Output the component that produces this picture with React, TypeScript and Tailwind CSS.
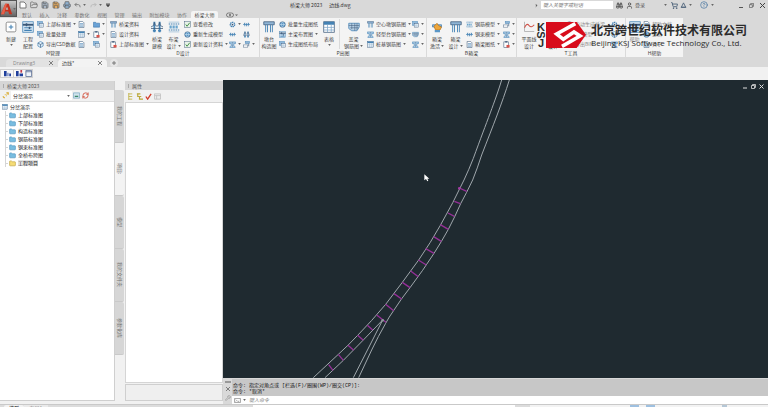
import type { ReactNode } from "react";
import { Binoculars, ChevronRight, CircleHelp, Folder, FolderOpen, Printer, RefreshCw, Save, ShoppingCart, User, Wrench } from "lucide-react";

type GlyphName =
  | "pier" | "beam" | "doc" | "table" | "tiles" | "folder" | "box" | "check" | "globe" | "clip"
  | "towers" | "rows" | "wave" | "spring" | "hat" | "arrows" | "plus" | "hand" | "gear" | "steps";

const blue = "#4482b4";
const navy = "#3b5878";

const glyphs: Record<GlyphName, ReactNode> = {
  plus: (
    <>
      <rect x="1.5" y="1.5" width="13" height="13" rx="2" fill="#fff" stroke="#6f6f6f" />
      <path d="M8 5v6M5 8h6" stroke={blue} strokeWidth="1.4" />
    </>
  ),
  table: (
    <>
      <rect x="1" y="1" width="14" height="14" fill="#fff" stroke={navy} />
      <rect x="1" y="1" width="14" height="4" fill={blue} />
      <path d="M1 8.500h14M1 12h14M6 5v10M11 5v10" stroke="#7fa6c8" />
    </>
  ),
  rows: (
    <>
      <rect x="1" y="1" width="14" height="14" fill="#d6e6f3" stroke={blue} />
      <path d="M1 5h14" stroke={navy} strokeWidth="2.500" />
      <path d="M3 9h10M3 12.500h10" stroke={blue} strokeWidth="1.500" />
      <path d="M6 3v4M10 7.500v3" stroke={navy} strokeWidth="2" />
    </>
  ),
  doc: (
    <>
      <path d="M2.500 1h8l3 3v11h-11z" fill="#fff" stroke={navy} strokeWidth="1.300" />
      <path d="M4.500 6h7M4.500 9h7M4.500 12h7" stroke={blue} strokeWidth="1.500" />
    </>
  ),
  tiles: (
    <>
      <rect x="1" y="1" width="12" height="9" fill="#8fb9dc" stroke={blue} />
      <rect x="5" y="6" width="10" height="8" fill="#fff" stroke={navy} />
      <path d="M7 9h6M7 11.500h6" stroke={blue} />
    </>
  ),
  box: (
    <>
      <path d="M8 1l6 3.500v7L8 15l-6-3.500v-7z" fill="#dcecf8" stroke={blue} strokeWidth="1.500" />
      <path d="M2 4.500L8 8l6-3.500M8 8v7" stroke={navy} strokeWidth="1.500" fill="none" />
    </>
  ),
  folder: <path d="M1 3h5l2 2h7v9H1z" fill="#6aa2d6" stroke="#3d73a8" strokeWidth="1.300" />,
  clip: (
    <>
      <rect x="2" y="2" width="11" height="13" fill="#fff" stroke={navy} strokeWidth="1.300" />
      <path d="M5 2h5" stroke={navy} strokeWidth="3" />
      <rect x="8" y="9" width="7" height="6" fill="#d9534a" />
    </>
  ),
  check: (
    <>
      <rect x="1" y="1" width="14" height="14" fill="#e8f2e8" stroke={navy} />
      <path d="M4 8l3 4 6-8" stroke="#3f8f45" strokeWidth="2.200" fill="none" />
    </>
  ),
  globe: (
    <>
      <circle cx="8" cy="8" r="6.500" fill="#5b97c6" stroke={navy} />
      <path d="M2 8h12M8 2c-4 4-4 8 0 12c4-4 4-8 0-12" stroke="#e9f3fa" fill="none" />
    </>
  ),
  pier: (
    <>
      <path d="M1 1h14v4H1z" fill="#8fb5d6" stroke={navy} />
      <path d="M3.500 5v10M6 5v10M10 5v10M12.500 5v10" stroke={blue} strokeWidth="1.200" />
    </>
  ),
  beam: (
    <>
      <path d="M1 2h14v4h-4v5l3 2v2H2v-2l3-2V6H1z" fill="#a9c9e3" stroke={blue} strokeWidth="1.200" />
      <path d="M8 3v11" stroke={navy} strokeDasharray="2 1" />
    </>
  ),
  towers: (
    <>
      <path d="M4.500 1v14M11.500 1v14" stroke={blue} strokeWidth="2.500" />
      <path d="M0 10h16M0 8q4.500-1 4.500-6q1 5 3.500 5t3.500-5q0 5 4.500 6" stroke={navy} fill="none" />
      <path d="M2.500 13h4M9.500 13h4" stroke={blue} strokeWidth="2" />
    </>
  ),
  wave: (
    <>
      <path d="M2 1v13h13" stroke="#a5a5a5" fill="none" />
      <path d="M2 9q3-7 6-3t7-1" stroke="#cf5147" strokeWidth="1.400" fill="none" />
    </>
  ),
  spring: (
    <>
      <path d="M1 4h14M1 12h14" stroke={blue} strokeDasharray="2 1" strokeWidth="1.500" />
      <path d="M2 8h12" stroke="#6ba6ce" strokeWidth="4" strokeDasharray="3 1" />
      <path d="M1 1.500h14M1 14.500h14" stroke="#9bbdd7" />
    </>
  ),
  hat: (
    <>
      <path d="M1 3h14v5l-3 5H5L1 10z" fill="#b6cfe4" stroke={blue} />
      <path d="M1 6h14M3 9h11M5 3v8M9 3v10M12 3v9" stroke={navy} strokeWidth=".7" />
    </>
  ),
  arrows: <path d="M1 8h14M4 4v8M12 4v8M1 8l3-3M15 8l-3-3M8 5v7" stroke={blue} strokeWidth="1.800" fill="none" />,
  hand: (
    <>
      <path d="M2 5h12v3H2z" fill="#8fb5d6" stroke={blue} />
      <path d="M4 7l4-4 2 3 4 2-2 4H6z" fill="#eda63c" stroke="#b9741a" />
      <path d="M5 12h7v3H5z" fill="#5b97c6" />
    </>
  ),
  gear: (
    <>
      <circle cx="8" cy="8" r="5" fill="none" stroke={blue} strokeWidth="3" strokeDasharray="3 1" />
      <circle cx="8" cy="8" r="2" fill={navy} />
    </>
  ),
  steps: (
    <>
      <rect x="5" y="1" width="10" height="5" fill="#8fb5d6" stroke={blue} />
      <rect x="1" y="9" width="10" height="5" fill="#fff" stroke={navy} />
      <path d="M13 6v6" stroke={navy} strokeWidth="1.500" />
    </>
  ),
};

function Glyph({ name, className = "size-[7px]" }: { name: GlyphName; className?: string }) {
  return (
    <svg viewBox="0 0 16 16" className={`shrink-0 ${className}`} aria-hidden="true">
      {glyphs[name]}
    </svg>
  );
}

function Caret({ className = "" }: { className?: string }) {
  return (
    <svg viewBox="0 0 4 3" className={`h-[2px] w-[3px] shrink-0 ${className}`} aria-hidden="true">
      <path d="M0 0h4L2 3z" fill="#666" />
    </svg>
  );
}

interface SmallItem {
  icon: GlyphName;
  label?: string;
  menu?: boolean;
}

function SmallColumn({ items, className }: { items: SmallItem[]; className: string }) {
  return (
    <div className={`flex shrink-0 flex-col ${className}`}>
      {items.map((item, i) => (
        <button key={i} type="button" className="flex h-[10px] items-center gap-[2px] whitespace-nowrap" aria-label={item.label ?? "工具"}>
          <Glyph name={item.icon} />
          {item.label && <span>{item.label}</span>}
          {item.menu && <Caret />}
        </button>
      ))}
    </div>
  );
}

function BigButton({ icon, lines, menu, className }: { icon: GlyphName; lines: string[]; menu?: boolean; className: string }) {
  return (
    <button type="button" className={`flex shrink-0 flex-col items-center ${className}`}>
      <Glyph name={icon} className="mb-[2px] size-[12px]" />
      {lines.map((line, i) => (
        <span key={line} className="flex h-[7px] items-center gap-px leading-[7px] whitespace-nowrap">
          {line}
          {menu && lines.length > 1 && i === lines.length - 1 && <Caret />}
        </span>
      ))}
      {menu && lines.length === 1 && <Caret className="mt-[2px]" />}
    </button>
  );
}

function Group({ title, className, children }: { title: string; className: string; children: ReactNode }) {
  return (
    <section className={`flex shrink-0 flex-col border-r border-[#dadada] ${className}`}>
      <div className="flex h-[31px] pt-px">{children}</div>
      <h2 className="text-center leading-[8px]">{title}</h2>
    </section>
  );
}

const menus = ["默认", "插入", "注释", "参数化", "视图", "管理", "输出", "附加模块", "协作"];

function TitleBar() {
  return (
    <header className="flex h-[18px] shrink-0">
      <button type="button" aria-label="应用程序菜单" className="flex h-[17px] w-[17px] shrink-0 items-center border border-[#555] bg-linear-to-b from-[#c9c9c9] to-[#666]">
        <svg viewBox="0 0 14 14" className="size-[12px]" aria-hidden="true">
          <path d="M0 13L5 1h4l4 12h-3.500L8.500 10H5l-1.500 3z" fill="#c5321f" />
          <path d="M5.500 8L7 4l1.500 4z" fill="#b9b9b9" />
          <path d="M5 1h2L3.500 13H0z" fill="#e8614a" />
        </svg>
        <Caret />
      </button>
      <div className="flex min-w-0 grow flex-col">
        <div className="flex h-[10px] items-center">
          <div className="flex w-[273px] shrink-0 items-center gap-[2px] pl-[2px] text-[#5a5a5a]">
            <svg viewBox="0 0 8 8" className="size-[8px]"><path d="M1 1h4l2 2v4H1z" fill="#fff" stroke="#777" /></svg>
            <FolderOpen size={8} className="ml-px" />
            <Save size={8} className="ml-px" fill="#a9b6c4" />
            <Save size={8} className="ml-px" fill="#e0a860" />
            <Printer size={8} className="ml-px" fill="#8fb0cf" />
            <svg viewBox="0 0 8 8" className="ml-px size-[7px]"><path d="M3 1L1 3l2 2M1 3h4q2 0 2 3" fill="none" stroke="#777" /></svg>
            <Caret />
            <svg viewBox="0 0 8 8" className="ml-[2px] size-[7px]"><path d="M5 1l2 2-2 2M7 3H3Q1 3 1 6" fill="none" stroke="#b8b8b8" /></svg>
            <Caret />
            <svg viewBox="0 0 5 5" className="ml-[2px] size-[4px]"><path d="M0 .5h5M0 2h5L2.500 5z" fill="#444" stroke="#444" strokeWidth=".6" /></svg>
          </div>
          <h1 className="flex shrink-0 gap-[7px] text-[#333]">
            <span>桥梁大师 2023</span>
            <span>边线.dwg</span>
          </h1>
          <div className="ml-auto flex shrink-0 items-center text-[#555]">
            <ChevronRight size={5} className="mr-[2px]" fill="#555" />
            <input aria-label="搜索" placeholder="键入关键字或短语" className="h-[8px] w-[72px] bg-white px-[2px] text-[5px] italic placeholder:text-[#777]" />
            <Binoculars size={7} strokeWidth={3} className="ml-[3px]" />
            <User size={7} strokeWidth={3} className="ml-[3px]" />
            <button type="button" className="ml-[2px] w-[10px] whitespace-nowrap">登录</button>
            <Caret className="ml-[19px]" />
            <ShoppingCart size={7} strokeWidth={3} className="ml-[4px] text-[#4a6078]" />
            <svg viewBox="0 0 8 8" className="ml-[2px] size-[7px]"><path d="M4 1l2.500 5h-5zM1 6h6" fill="none" stroke="#4a6078" /></svg>
            <Caret className="ml-[2px]" />
            <CircleHelp size={8} className="ml-[8px] text-[#3f6f9f]" />
            <Caret className="ml-[3px]" />
          </div>
          <div className="ml-[24px] flex w-[30px] shrink-0 items-center justify-between pr-[3px]">
            <button type="button" aria-label="最小化"><svg viewBox="0 0 5 5" className="size-[5px]"><path d="M1 4.500h4" stroke="#555" /></svg></button>
            <button type="button" aria-label="还原"><svg viewBox="0 0 6 6" className="size-[5px]"><path d="M2 2V.5h3.500V4H4M.5 2H4v3.500H.5z" fill="none" stroke="#555" strokeWidth=".8" /></svg></button>
            <button type="button" aria-label="关闭"><svg viewBox="0 0 5 5" className="size-[5px]"><path d="M0 0l5 5M5 0L0 5" stroke="#444" /></svg></button>
          </div>
        </div>
        <nav className="flex h-[8px] items-end">
          <div className="flex w-[174px] shrink-0 justify-between pr-[4px] pl-[5px] leading-[7px] text-[#777]">
            {menus.map((m) => (
              <button key={m} type="button" className="whitespace-nowrap">{m}</button>
            ))}
          </div>
          <button type="button" className="h-[7px] w-[27px] rounded-t-xs bg-[#f4f4f4] leading-[7px] text-[#444]">桥梁大师</button>
          <svg viewBox="0 0 12 6" className="ml-[8px] h-[6px] w-[12px]" aria-hidden="true">
            <rect x=".5" y="1" width="7" height="4" rx="2" fill="none" stroke="#666" strokeWidth=".8" />
            <circle cx="4" cy="3" r="1" fill="#666" />
            <path d="M9 2.500h3L10.500 4z" fill="#666" />
          </svg>
        </nav>
      </div>
    </header>
  );
}

function CompanyLogo() {
  return (
    <div className="absolute top-[4px] left-[536px] flex items-center text-[#2b2b2b]">
      <div className="flex w-[10px] flex-col items-center font-['Liberation_Sans'] text-[11px] leading-[8px] font-bold">
        <span>K</span>
        <span className="rotate-90">S</span>
        <span>J</span>
      </div>
      <svg viewBox="0 0 120 78" className="h-[26px] w-[40px]" aria-hidden="true">
        <path d="M0 0h92l28 38-28 40H0z" fill="#d80c1c" />
        <path d="M88 5L32 36l20 16 32-22 18 12-54 31" fill="none" stroke="#fff" strokeWidth="11" />
      </svg>
      <div className="ml-[5px] whitespace-nowrap">
        <p className="text-[12px] leading-[15px] font-bold">北京跨世纪软件技术有限公司</p>
        <p className="font-['Open_Sans'] text-[8px] leading-[11px]">Beijing KSJ Software Technology Co., Ltd.</p>
      </div>
    </div>
  );
}

function Ribbon() {
  return (
    <div className="relative flex h-[39px] shrink-0">
      <div className="flex bg-[#f4f4f4] text-[#444]">
        <Group title="M管理" className="w-[107px]">
          <BigButton icon="plus" lines={["新建"]} menu className="w-[22px] pt-[2px]" />
          <BigButton icon="rows" lines={["工程", "配置"]} className="w-[12px] pt-[2px]" />
          <SmallColumn className="w-[41px] pl-[3px]" items={[{ icon: "tiles", label: "上部标准图", menu: true }, { icon: "tiles", label: "批量处理" }, { icon: "box", label: "导出CSD数据" }]} />
          <SmallColumn className="w-[15px] pl-[3px]" items={[{ icon: "doc" }, { icon: "table", menu: true }, { icon: "doc" }]} />
          <SmallColumn className="w-[16px] pl-[3px]" items={[{ icon: "folder", menu: true }, { icon: "clip", menu: true }, { icon: "tiles" }]} />
        </Group>
        <Group title="D设计" className="w-[153px]">
          <SmallColumn className="w-[42px] pl-[3px]" items={[{ icon: "pier", label: "桥梁资料" }, { icon: "doc", label: "设计资料" }, { icon: "clip", label: "上部标准图", menu: true }]} />
          <BigButton icon="towers" lines={["桥梁", "建模"]} className="w-[16px] pt-[2px]" />
          <BigButton icon="spring" lines={["布梁", "设计"]} menu className="w-[17px] pt-[2px]" />
          <SmallColumn className="w-[47px] pl-[2px]" items={[{ icon: "check", label: "查看修改" }, { icon: "globe", label: "重新生成模型" }, { icon: "check", label: "更新设计资料", menu: true }]} />
          <SmallColumn className="w-[14px]" items={[{ icon: "gear", menu: true }, { icon: "arrows" }, { icon: "beam", menu: true }]} />
          <SmallColumn className="w-[14px]" items={[{ icon: "arrows" }, { icon: "towers" }, { icon: "steps", menu: true }]} />
        </Group>
        <Group title="P出图" className="w-[167px]">
          <BigButton icon="pier" lines={["墩台", "构造图"]} className="w-[18px] pt-[2px]" />
          <SmallColumn className="w-[42px] pl-px" items={[{ icon: "globe", label: "批量生成图纸" }, { icon: "rows", label: "主梁布置图", menu: true }, { icon: "tiles", label: "生成图纸布局" }]} />
          <BigButton icon="table" lines={["表格"]} menu className="w-[18px] pt-[2px]" />
          <BigButton icon="hat" lines={["盖梁", "钢筋图"]} menu className="ml-px w-[28px] border-l border-[#dadada] pt-[2px]" />
          <SmallColumn className="w-[45px]" items={[{ icon: "pier", label: "空心墩钢筋图", menu: true }, { icon: "beam", label: "轻型台钢筋图", menu: true }, { icon: "table", label: "桩基钢筋图", menu: true }]} />
          <SmallColumn className="w-[14px]" items={[{ icon: "tiles", menu: true }, { icon: "hat", menu: true }, { icon: "beam", menu: true }]} />
        </Group>
        <Group title="B箱梁" className="w-[90px]">
          <BigButton icon="hand" lines={["箱梁", "激活"]} menu className="w-[20px] pt-[2px]" />
          <BigButton icon="pier" lines={["箱梁", "设计"]} menu className="w-[17px] pt-[2px]" />
          <SmallColumn className="w-[39px] pl-[2px]" items={[{ icon: "spring", label: "钢筋模型", menu: true }, { icon: "arrows", label: "钢束模型", menu: true }, { icon: "doc", label: "箱梁图纸", menu: true }]} />
          <SmallColumn className="w-[13px]" items={[{ icon: "steps", menu: true }, { icon: "beam", menu: true }, { icon: "clip", menu: true }]} />
        </Group>
        <Group title="T工具" className="w-[109px]">
          <BigButton icon="wave" lines={["平面线", "设计"]} className="w-[24px] pt-[2px]" />
          <BigButton icon="hat" lines={["纵面", "设计"]} className="w-[24px] pt-[2px]" />
          <SmallColumn className="w-[46px] pl-px text-[#888]" items={[{ icon: "globe", label: "自动生成桥梁" }, { icon: "folder", label: "IFC模型" }, { icon: "globe", label: "导出BIM" }]} />
          <SmallColumn className="w-[14px]" items={[{ icon: "gear" }, { icon: "box" }, { icon: "beam" }]} />
        </Group>
        <Group title="H帮助" className="w-[58px]">
          <BigButton icon="rows" lines={["帮助"]} className="w-[17px] pt-[2px] text-[#888]" />
          <SmallColumn className="w-[40px] text-[#888]" items={[{ icon: "doc", label: "帮助文档" }, { icon: "globe", label: "更新" }, { icon: "doc", label: "关于" }]} />
        </Group>
      </div>
      <CompanyLogo />
    </div>
  );
}

function CloseMark() {
  return (
    <svg viewBox="0 0 5 5" className="size-[4px]" aria-hidden="true">
      <path d="M0 0l5 5M5 0L0 5" stroke="#666" />
    </svg>
  );
}

function FileTabs() {
  return (
    <nav className="flex h-[10px] shrink-0 items-end bg-[#d9d9d9] leading-[8px]">
      <div className="ml-[6px] flex h-[8px] w-[52px] items-center justify-between rounded-t-sm bg-[#e2e2e2] pr-[5px] pl-[7px] font-['Open_Sans'] text-[#888]">
        <span>Drawing3</span>
        <CloseMark />
      </div>
      <div className="flex h-[8px] w-[49px] items-center justify-between rounded-t-sm bg-[#f3f3f3] pr-[5px] pl-[4px] text-[#444]">
        <span>边线*</span>
        <CloseMark />
      </div>
      <button type="button" aria-label="新图形" className="ml-[3px] flex size-[8px] items-center justify-center rounded-full bg-[#e6e6e6]">
        <svg viewBox="0 0 5 5" className="size-[4px]"><path d="M2.500 0v5M0 2.500h5" stroke="#666" /></svg>
      </button>
    </nav>
  );
}

function FloatingToolbar() {
  return (
    <div className="flex h-[13px] shrink-0 items-center bg-[#f1f1f1]">
      <div className="flex h-[9px] w-[33px] items-center gap-[2px] border border-[#cfcfcf] bg-[#f7f7f7] pl-[3px]">
        <svg viewBox="0 0 8 8" className="size-[7px]"><path d="M0 1h3v6H0zM4 3h1v4H4zM6 4h2v3H6z" fill="#1f3f9c" /></svg>
        <span className="h-[7px] w-px bg-[#ccc]" />
        <svg viewBox="0 0 8 8" className="size-[7px]"><path d="M0 1h3v6H0zM4 4h4v3H4z" fill="#1f3f9c" /><path d="M5 0h2v3H5z" fill="#c23b4b" /></svg>
        <svg viewBox="0 0 8 8" className="size-[7px]"><path d="M1 .5h6.500v7H1z" fill="#eef2f8" stroke="#66789c" /><path d="M1 2h7" stroke="#66789c" /></svg>
      </div>
    </div>
  );
}

const drawings = ["上部标准图", "下部标准图", "构造标准图", "钢筋标准图", "钢束标准图", "全桥布跨图"];

function PaletteHeader({ title }: { title: string }) {
  return (
    <h2 className="flex h-[9px] shrink-0 items-center gap-[3px] bg-[#d6d6d6] pl-[3px] leading-[9px] text-[#555]">
      <span className="h-[4px] w-px bg-[#aaa]" />
      {title}
    </h2>
  );
}

function ProjectPanel() {
  return (
    <section className="flex w-[115px] shrink-0 flex-col border-r border-b border-[#cfcfcf] bg-white">
      <PaletteHeader title="桥梁大师 2023" />
      <div className="flex h-[12px] shrink-0 items-center border-b border-[#dcdcdc] bg-[#f1f1f1] pl-[2px]">
        <svg viewBox="0 0 8 8" className="size-[7px]"><path d="M1 5l2 2M5 1h2v2" stroke="#d9a92c" strokeWidth="1.500" fill="none" /><path d="M3 3h2v2" stroke="#e8c766" fill="none" /></svg>
        <div className="relative ml-[2px] flex h-[9px] w-[61px] items-center bg-white">
          <select aria-label="项目" className="h-[9px] w-full appearance-none pl-[2px] text-[5px] leading-[9px] text-[#222]">
            <option>分岔演示</option>
          </select>
          <Caret className="pointer-events-none absolute right-[2px]" />
        </div>
        <svg viewBox="0 0 8 8" className="ml-px size-[7px]"><path d="M.5 1h7v6h-7z" fill="#cfe3ee" stroke="#8bb3c9" /><path d="M2 5h4" stroke="#3d8a6a" strokeWidth="1.500" /></svg>
        <RefreshCw size={7} strokeWidth={3} className="ml-[2px] text-[#d2533f]" />
      </div>
      <div className="pt-px text-[#222]">
        <div className="flex h-[8px] items-center gap-[2px] pl-[2px]">
          <Glyph name="table" className="size-[6px]" />
          <span>分岔演示</span>
        </div>
        <ul className="ml-[5px] border-l border-[#d5d5d5]">
          {[...drawings, "工程项目"].map((name, i) => (
            <li key={name} className="flex h-[8px] items-center">
              <span className="mr-px h-px w-[2px] bg-[#d5d5d5]" />
              <Folder size={7} className={i < 6 ? "fill-[#79bde0] text-[#4a8db8]" : "fill-[#f5dc76] text-[#b99b35]"} />
              <span className={i < 6 ? "ml-[2px] leading-[6px]" : "ml-[2px] bg-[#e2e2e2] leading-[6px]"}>{name}</span>
            </li>
          ))}
        </ul>
      </div>
    </section>
  );
}

const sideTabs = [
  { label: "我的工程", tone: "bg-[#d6d6d6]" },
  { label: "项目:", tone: "bg-[#f3f3f3]" },
  { label: "模型", tone: "bg-[#d6d6d6]" },
  { label: "我的文件夹", tone: "bg-[#d6d6d6]" },
  { label: "参数化库", tone: "bg-[#d6d6d6]" },
];

function SideTabs() {
  return (
    <nav className="flex w-[9px] shrink-0 flex-col pt-[9px]">
      {sideTabs.map((tab) => (
        <button key={tab.label} type="button" className={`flex h-[53px] items-center justify-center rounded-r-xs border-b border-[#c9c9c9] text-[#777] ${tab.tone}`}>
          <span className="leading-[6px] [text-orientation:sideways] [writing-mode:vertical-rl]">{tab.label}</span>
        </button>
      ))}
    </nav>
  );
}

function PropertiesPanel() {
  return (
    <section className="ml-px flex w-[98px] shrink-0 flex-col">
      <PaletteHeader title="属性" />
      <div className="flex h-[12px] shrink-0 items-center gap-[2px] bg-[#f1f1f1] pl-[2px]">
        <svg viewBox="0 0 8 8" className="size-[7px]"><path d="M2 0v8M2 1h4M2 4h4M2 7h4" stroke="#c2b44a" fill="none" /></svg>
        <svg viewBox="0 0 8 8" className="size-[7px]"><path d="M1 1h4M2 1v3h4M4 4v3h4" stroke="#bba83a" strokeWidth="1.300" fill="none" /></svg>
        <svg viewBox="0 0 8 8" className="size-[7px]"><path d="M1 4l2 3 4-6" stroke="#d23c2a" strokeWidth="1.500" fill="none" /></svg>
        <svg viewBox="0 0 8 8" className="size-[7px]"><path d="M.5 1h7v6h-7zM.5 3h7M3 3v4" stroke="#c2c2c2" fill="#ececec" /></svg>
      </div>
      <div className="grow border border-[#d5d5d5] bg-white" />
      <div className="mt-px h-[17px] shrink-0 border border-[#cfcfcf] bg-[#efefef]" />
    </section>
  );
}

// [x1, y1, x2, y2] of every cross beam between the two edge lines
const crossBeams = [
  [478, 24, 500, 34], [463, 64, 481, 71], [444, 99, 463, 109], [421, 134, 445, 148], [401, 170, 424, 184], [377, 206, 402, 220],
  [355, 240, 379, 255], [332, 273, 355, 290], [307, 307, 330, 323], [282, 341, 305, 357], [257, 373, 281, 392], [230, 405, 258, 427],
  [202, 436, 218, 450], [173, 466, 190, 481], [144, 496, 161, 511], [115, 523, 130, 541], [86, 554, 99, 571],
];

function DrawingCanvas() {
  return (
    <div className="relative min-h-0 grow bg-[#1f2a30]">
      <svg viewBox="-231 -300 1635 894" preserveAspectRatio="xMidYMid slice" className="absolute inset-0 h-full w-full" role="img" aria-label="边线图形">
        <g fill="none" stroke="#9fa7ac" strokeWidth="3">
          <path d="M605 -300C585 -235 562 -180 520 -65Q507 -32 492 0Q460 68 421 136Q392 188 356 240L307 307L257 373Q215 423 173 466Q145 496 115 523L40 593" />
          <path d="M628 -300C606 -230 580 -165 545 -75Q532 -35 518 0Q500 38 482 71Q464 112 445 148Q424 186 402 220Q370 270 330 323Q303 357 280 393Q267 411 257 430Q235 468 215 510L176 593" />
          <path d="M248 420L210 495L160 593M248 420L190 480L130 541L75 593" />
        </g>
        <g stroke="#962f98" strokeWidth="4">
          {crossBeams.map(([x1, y1, x2, y2]) => (
            <line key={x1} x1={x1} y1={y1} x2={x2} y2={y2} />
          ))}
        </g>
        <circle cx="478" cy="25" r="4" fill="#a43aa4" />
        <circle cx="248" cy="421" r="4" fill="#8f979c" />
        <path d="M373 -17v18l5-4 4 7 3-2-3-6h6z" fill="#fff" />
      </svg>
      <div className="absolute top-[4px] right-[4px] flex gap-[3px]">
        <svg viewBox="0 0 5 5" className="size-[5px]"><path d="M0 4h4" stroke="#ddd" /></svg>
        <svg viewBox="0 0 5 5" className="size-[5px]"><path d="M1.500 1.500V.5h3v3h-1M.5 1.500h3v3h-3z" fill="none" stroke="#ddd" strokeWidth=".8" /></svg>
        <svg viewBox="0 0 5 5" className="size-[5px]"><path d="M.5.5l4 4M4.500.5l-4 4" stroke="#ddd" /></svg>
      </div>
    </div>
  );
}

function CommandLine() {
  return (
    <div className="flex h-[26px] shrink-0 border-t border-[#d8d8d8] bg-[#c7c7c7]">
      <div className="flex w-[9px] shrink-0 flex-col items-center gap-[4px] bg-[#d9d9d9] pt-[2px]">
        <span className="h-[2px] w-[6px] shrink-0 bg-[#999]" />
        <CloseMark />
        <Wrench size={6} className="text-[#888]" />
      </div>
      <div className="flex min-w-0 grow flex-col">
        <div className="h-[17px] pt-[4px] pl-px font-['Liberation_Mono','Noto_Sans_CJK_SC',monospace] leading-[6px] whitespace-pre text-[#111]">
          <p>命令: 指定对角点或 [栏选(F)/圈围(WP)/圈交(CP)]:</p>
          <p>命令: *取消*</p>
        </div>
        <label className="flex h-[8px] items-center gap-[2px] bg-white pl-[2px]">
          <svg viewBox="0 0 8 6" className="h-[5px] w-[7px]"><path d="M.5.5h7v5h-7zM2 2l1 1-1 1M4 4h2" fill="none" stroke="#777" strokeWidth=".8" /></svg>
          <Caret />
          <input aria-label="命令" placeholder="键入命令" className="ml-px h-[8px] min-w-0 grow text-[5px] italic placeholder:text-[#888]" />
        </label>
      </div>
    </div>
  );
}

function StatusBar() {
  return (
    <footer className="flex h-[3px] shrink-0 items-start overflow-hidden border-t border-[#c9c9c9] bg-[#dcdcdc] leading-[5px] text-[#444]">
      <span className="ml-[4px] w-[20px] rounded-t-xs bg-[#f3f3f3] text-center font-bold">模型</span>
      <span className="w-[24px] bg-[#eaeaea] text-center text-[#888]">布局1</span>
      <span className="ml-[6px] text-[#888]">+</span>
      <span className="ml-auto h-full w-[262px] bg-white" />
      <div className="ml-[15px] flex h-full w-[238px] gap-[7px] bg-[#f3f3f3] pl-[100px]">
        <span className="h-full w-[9px] bg-[#9ec0e0]" />
        <span className="h-full w-[9px] bg-[#9ec0e0]" />
        <span className="ml-[60px] h-full w-[5px] bg-[#b5c7d6]" />
      </div>
    </footer>
  );
}

export default function App() {
  return (
    <div className="flex h-screen flex-col overflow-hidden bg-[#d9d9d9] font-['Noto_Sans_CJK_SC',sans-serif] text-[5px] leading-[10px]">
      <TitleBar />
      <Ribbon />
      <FileTabs />
      <FloatingToolbar />
      <main className="flex min-h-0 grow bg-[#f1f1f1]">
        <div className="flex pt-px pb-[3px]">
          <ProjectPanel />
          <SideTabs />
          <PropertiesPanel />
        </div>
        <div className="flex min-w-0 grow flex-col">
          <DrawingCanvas />
          <CommandLine />
        </div>
      </main>
      <StatusBar />
    </div>
  );
}
